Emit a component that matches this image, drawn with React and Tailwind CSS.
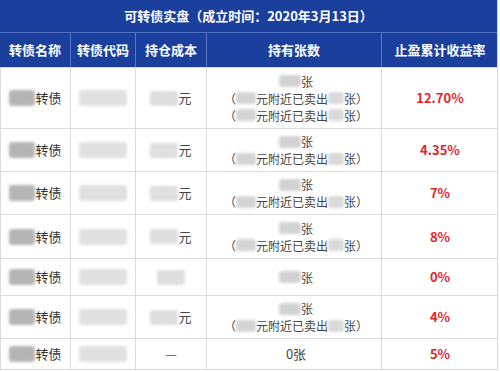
import React from 'react';

const Blur = ({ w, h = 14, tone = 'bg-[#c9c9c9]' }) => (
    <span
        className={`inline-block align-middle rounded-[3px] blur-[1.5px] ${tone}`}
        style={{ width: w, height: h }}
    />
);

const Sold = ({ a = 20, b = 16 }) => (
    <div className="flex items-center justify-center leading-[17px]">
        <span>（</span>
        <Blur w={a} h={12} tone="bg-[#d4d4d4]" />
        <span>元附近已卖出</span>
        <Blur w={b} h={12} tone="bg-[#d9d9d9]" />
        <span>张）</span>
    </div>
);

const Zhang = ({ w = 22 }) => (
    <div className="flex items-center justify-center leading-[17px]">
        <Blur w={w} h={12} tone="bg-[#d2d2d2]" />
        <span>张</span>
    </div>
);

const rows = [
    { h: 'h-[61px]', cost: true, sold: 2, rate: '12.70%' },
    { h: 'h-[43px]', cost: true, sold: 1, rate: '4.35%' },
    { h: 'h-[43px]', cost: true, sold: 1, rate: '7%' },
    { h: 'h-[44px]', cost: true, sold: 1, rate: '8%' },
    { h: 'h-[37px]', cost: false, sold: 0, rate: '0%' },
    { h: 'h-[43px]', cost: true, sold: 1, rate: '4%' },
    { h: 'h-[31px]', dash: true, zero: true, sold: 0, rate: '5%' },
];

const cols = 'grid grid-cols-[71px_65px_71px_175px_116px]';

export default function App() {
    return (
        <div
            className="w-[500px] h-[371px] bg-white text-[13px] text-[#454545]"
            style={{ fontFamily: '"Noto Sans CJK SC", "Noto Sans", sans-serif' }}
        >
            <div className="w-[498px] border-r border-b border-[#d8d8d8]">
                {/* Title */}
                <div className="h-[33px] bg-[#1b3f9c] text-white font-bold text-[13px] flex items-center justify-center border-b border-[#4f6fc4]">
                    可转债实盘（成立时间：2020年3月13日）
                </div>

                {/* Header */}
                <div className={`${cols} h-[34px] bg-[#1b3f9c] text-white font-bold text-[13px]`}>
                    {['转债名称', '转债代码', '持仓成本', '持有张数', '止盈累计收益率'].map((t, i) => (
                        <div
                            key={t}
                            className={`flex items-center justify-center ${i < 4 ? 'border-r border-[#5a78c8]' : ''}`}
                        >
                            {t}
                        </div>
                    ))}
                </div>

                {/* Body */}
                {rows.map((r, i) => (
                    <div key={i} className={`${cols} ${r.h} border-t border-[#dcdcdc] first:border-t-0`}>
                        <div className="flex items-center justify-center border-r border-l border-[#dcdcdc]">
                            <Blur w={26} h={16} tone="bg-[#b4b4b4]" />
                            <span className="text-[#333]">转债</span>
                        </div>
                        <div className="flex items-center justify-center border-r border-[#dcdcdc]">
                            <Blur w={48} h={16} tone="bg-[#e0e0e0]" />
                        </div>
                        <div className="flex items-center justify-center border-r border-[#dcdcdc]">
                            {r.dash ? (
                                <span className="text-[#555]">—</span>
                            ) : (
                                <>
                                    <Blur w={28} h={15} tone="bg-[#dedede]" />
                                    {r.cost && <span>元</span>}
                                </>
                            )}
                        </div>
                        <div className="flex flex-col items-center justify-center border-r border-[#dcdcdc] pl-1 text-[12px]">
                            {r.zero ? <div className="text-[13px]">0张</div> : <Zhang />}
                            {r.sold >= 1 && <Sold />}
                            {r.sold >= 2 && <Sold />}
                        </div>
                        <div className="flex items-center justify-center font-bold text-[#e0262b]">
                            {r.rate}
                        </div>
                    </div>
                ))}
            </div>
        </div>
    );
}
